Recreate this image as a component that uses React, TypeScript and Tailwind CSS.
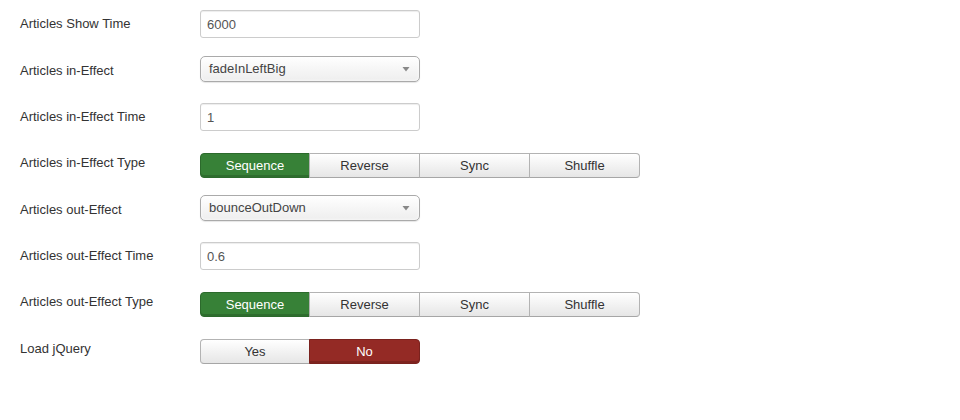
import React from "react";

type Row =
  | { label: string; kind: "input"; value: string; h: string }
  | { label: string; kind: "select"; value: string; h: string }
  | { label: string; kind: "group"; options: string[]; active: number; color: "green" | "red"; h: string };

const rows: Row[] = [
  { label: "Articles Show Time", kind: "input", value: "6000", h: "h-[47px]" },
  { label: "Articles in-Effect", kind: "select", value: "fadeInLeftBig", h: "h-[46px]" },
  { label: "Articles in-Effect Time", kind: "input", value: "1", h: "h-[46px]" },
  { label: "Articles in-Effect Type", kind: "group", options: ["Sequence", "Reverse", "Sync", "Shuffle"], active: 0, color: "green", h: "h-[47px]" },
  { label: "Articles out-Effect", kind: "select", value: "bounceOutDown", h: "h-[46px]" },
  { label: "Articles out-Effect Time", kind: "input", value: "0.6", h: "h-[46px]" },
  { label: "Articles out-Effect Type", kind: "group", options: ["Sequence", "Reverse", "Sync", "Shuffle"], active: 0, color: "green", h: "h-[47px]" },
  { label: "Load jQuery", kind: "group", options: ["Yes", "No"], active: 1, color: "red", h: "h-[46px]" },
];

function Control({ row }: { row: Row }) {
  if (row.kind === "input") {
    return (
      <input
        readOnly
        value={row.value}
        className="w-[220px] h-[28px] mt-[1px] px-[6px] border border-[#cccccc] rounded-[3px] bg-white text-[13px] text-[#555555] shadow-[inset_0_1px_1px_rgba(0,0,0,0.075)] outline-none"
      />
    );
  }
  if (row.kind === "select") {
    return (
      <div className="w-[220px] h-[26px] flex items-center justify-between pl-[8px] pr-[9px] border border-[#aaaaaa] rounded-[5px] bg-gradient-to-b from-white via-[#f6f6f6] to-[#eeeeee] shadow-[0_0_3px_white_inset,0_1px_1px_rgba(0,0,0,0.1)] text-[13px] text-[#444444]">
        <span>{row.value}</span>
        <svg width="8" height="6" viewBox="0 0 8 6">
          <path d="M0.5 1 L7.5 1 L4 5.5 Z" fill="#888888" />
        </svg>
      </div>
    );
  }
  const n = row.options.length;
  return (
    <div className="flex mt-[5px]">
      {row.options.map((o, i) => {
        const on = i === row.active;
        const first = i === 0;
        const last = i === n - 1;
        const base = "h-[25px] flex items-center justify-center text-[13px] border";
        const round = first ? "rounded-l-[4px]" : last ? "rounded-r-[4px]" : "";
        const tone = on
          ? row.color === "green"
            ? "bg-[#378137] border-[#2c6a2c] text-white shadow-[inset_0_-2px_0_rgba(0,0,0,0.15)]"
            : "bg-[#942a25] border-[#7a221e] text-white shadow-[inset_0_-2px_0_rgba(0,0,0,0.15)]"
          : "bg-gradient-to-b from-white to-[#e6e6e6] border-[#b3b3b3] border-b-[#a6a6a6] text-[#333333]";
        return (
          <div key={o} className={`${base} ${round} ${tone} ${first ? "w-[110px]" : "w-[111px] -ml-px"}`}>
            {o}
          </div>
        );
      })}
    </div>
  );
}

export default function App() {
  return (
    <div className="w-[960px] h-[420px] bg-white pt-[9px] pl-[20px] font-['Liberation_Sans',Arial,sans-serif] text-[13px] text-[#333333]">
      {rows.map((row) => (
        <div key={row.label} className={`flex items-start ${row.h}`}>
          <div className="w-[180px] pt-[6px] leading-[18px]">{row.label}</div>
          <Control row={row} />
        </div>
      ))}
    </div>
  );
}
